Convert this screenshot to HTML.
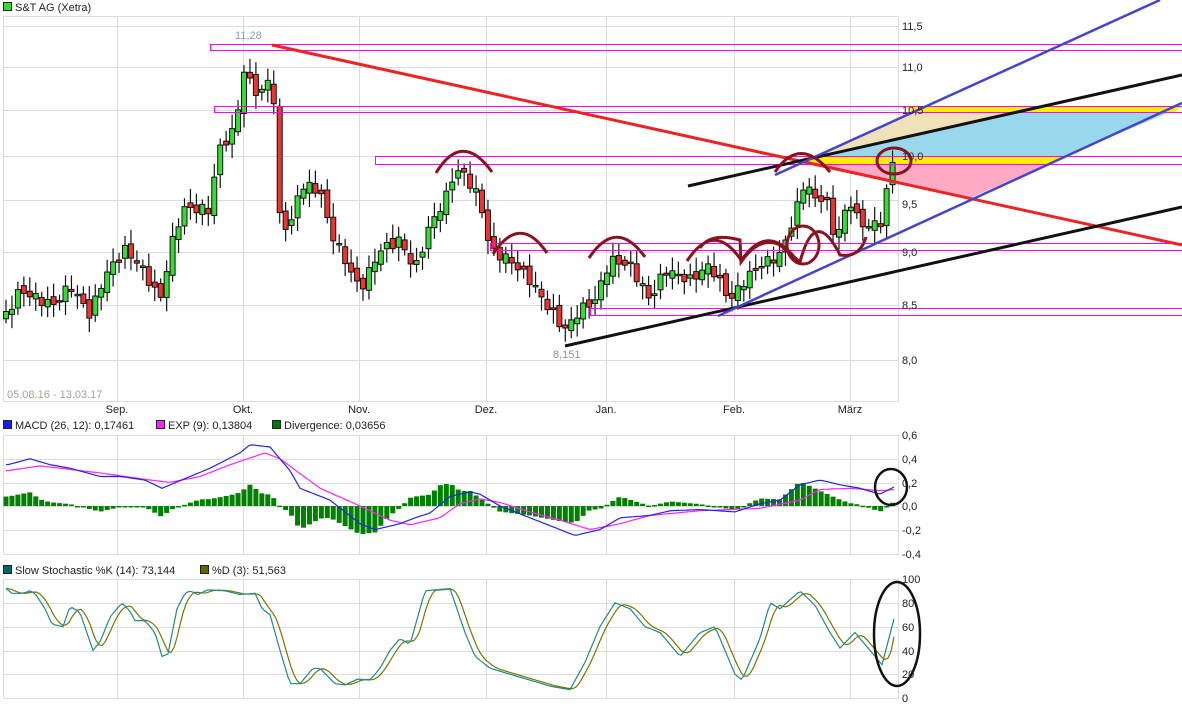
<!DOCTYPE html>
<html><head><meta charset="utf-8"><style>
body{margin:0;background:#fff;width:1182px;height:707px;overflow:hidden;font-family:"Liberation Sans",sans-serif}
svg{display:block}
text{font-family:"Liberation Sans",sans-serif;font-size:11px;fill:#222}
</style></head><body>
<svg id="s" width="1182" height="707" viewBox="0 0 1182 707">
<g id="grid" stroke="#dcdcdc" stroke-width="1" fill="none"></g>
<g id="fills"></g>
<g id="candles"></g>
<g id="over" fill="none"></g>
<g id="macd"></g>
<g id="stoch"></g>
<g id="labels"></g>
</svg>
<script>
const NS="http://www.w3.org/2000/svg";
function el(g,t,a,txt){const e=document.createElementNS(NS,t);for(const k in a)e.setAttribute(k,a[k]);if(txt!==undefined)e.textContent=txt;document.getElementById(g).appendChild(e);return e;}
const vx=[117,243,359,486,606,734,850];
function panel(y0,y1,hs){el('grid','rect',{x:3.5,y:y0+.5,width:895,height:y1-y0});hs.forEach(y=>el('grid','line',{x1:3,x2:898,y1:y+.5,y2:y+.5}));vx.forEach(x=>el('grid','line',{x1:x+.5,x2:x+.5,y1:y0,y2:y1}));}
panel(16,401,[26,67,110,156,200,252,305,360]);
panel(435,554,[459,483,506,530]);
panel(579,698,[603,627,651,674]);
const L=[[902,30,'11,5'],[902,71,'11,0'],[902,114,'10,5'],[902,160,'10,0'],[902,208,'9,5'],[902,256,'9,0'],[902,309,'8,5'],[902,364,'8,0'],
[902,439,'0,6'],[902,463,'0,4'],[902,487,'0,2'],[902,510,'0,0'],[902,534,'-0,2'],[902,558,'-0,4'],
[902,583,'100'],[902,607,'80'],[902,631,'60'],[902,655,'40'],[902,678,'20'],[902,702,'0']];
L.forEach(l=>el('labels','text',{x:l[0],y:l[1]},l[2]));
[[117,'Sep.'],[243,'Okt.'],[359,'Nov.'],[486,'Dez.'],[606,'Jan.'],[734,'Feb.'],[850,'März']].forEach(m=>el('labels','text',{x:m[0],y:413,'text-anchor':'middle'},m[1]));
el('labels','rect',{x:3.5,y:2.5,width:8,height:8,fill:'#33dd33',stroke:'#222'});
el('labels','text',{x:15,y:11},'S&T AG (Xetra)');
el('labels','text',{x:7,y:398,style:'fill:#b0a090'},'05.08.16 - 13.03.17');
el('labels','text',{x:235,y:39,style:'fill:#8ca0b8'},'11,28');
el('labels','text',{x:553,y:358,style:'fill:#a09080'},'8,151');
function leg(x,y,c,t){el('labels','rect',{x:x+.5,y:y-8.5,width:8,height:8,fill:c,stroke:'#222'});el('labels','text',{x:x+12,y:y},t);}
leg(3,429,'#1a1aee','MACD (26, 12): 0,17461');leg(156,429,'#ff22ff','EXP (9): 0,13804');leg(272,429,'#007700','Divergence: 0,03656');
leg(3,574,'#006666','Slow Stochastic %K (14): 73,144');leg(200,574,'#666600','%D (3): 51,563');
function interp(k,x){for(let i=0;i<k.length-1;i++){if(x>=k[i][0]&&x<=k[i+1][0]){const t=(x-k[i][0])/(k[i+1][0]-k[i][0]);return k[i][1]+t*(k[i+1][1]-k[i][1]);}}return x<k[0][0]?k[0][1]:k[k.length-1][1];}
const ck=[[6,315],[20,290],[40,300],[55,305],[70,285],[90,315],[105,275],[125,250],[140,265],[160,300],[175,230],[185,208],[210,210],[218,150],[235,130],[243,70],[255,90],[265,95],[272,55],[278,215],[290,230],[300,185],[320,190],[330,230],[345,260],[360,290],[380,250],[400,240],[415,270],[430,225],[445,200],[455,170],[465,175],[480,200],[490,250],[510,260],[530,280],[550,310],[565,330],[580,310],[595,300],[610,260],[630,265],[650,300],[665,270],[690,280],[710,265],[730,300],[745,280],[760,265],[780,255],[795,215],[805,180],[815,200],[825,195],[835,240],[850,200],[860,225],[880,225],[895,150]];
let prev=interp(ck,6);
for(let x=6;x<=896;x+=5.95){const c=interp(ck,x)+Math.sin(x*1.7)*5;const o=prev+Math.sin(x*2.3)*4;const up=c<o;const top=Math.min(o,c),bot=Math.max(o,c);
const w1=top-4-Math.abs(Math.sin(x*0.9))*10,w2=bot+4+Math.abs(Math.cos(x*1.3))*10;
el('candles','line',{x1:x,x2:x,y1:w1,y2:w2,stroke:'#111','stroke-width':1.2});
el('candles','rect',{x:x-2.5,y:top,width:5,height:Math.max(bot-top,1.5),fill:up?'#33dd33':'#ee3333',stroke:'#111','stroke-width':1});prev=c;}
el('fills','polygon',{points:'815,158 912,112 1023,112',fill:'#efe2b8'});
el('fills','polygon',{points:'823,156 1023,112 1170,112 1065,156',fill:'#99d8ea'});
el('fills','polygon',{points:'905,106 1182,106 1175,112 912,112',fill:'#ffee00'});
el('fills','polygon',{points:'805,156 1065,156 1050,164 800,164',fill:'#ffee00'});
el('fills','polygon',{points:'813,164 1048,164 970,198',fill:'#ffaac4'});
[[210,44,972,6],[214,106,968,6],[375,156,807,8],[490,243,692,7],[590,308,592,7]].forEach(r=>el('over','rect',{x:r[0]+.5,y:r[1]+.5,width:r[2],height:r[3],stroke:'#ff00ff','stroke-width':1}));
el('over','line',{x1:272,y1:45,x2:1182,y2:245,stroke:'#ee2222','stroke-width':3});
el('over','line',{x1:688,y1:186,x2:1182,y2:75,stroke:'#111','stroke-width':3});
el('over','line',{x1:565,y1:346,x2:1182,y2:207,stroke:'#111','stroke-width':3});
el('over','line',{x1:775,y1:175,x2:1160,y2:0,stroke:'#4444cc','stroke-width':2.5});
el('over','line',{x1:718,y1:316,x2:1182,y2:103,stroke:'#4444cc','stroke-width':2.5});
const dr={stroke:'#8b1020','stroke-width':3,fill:'none'};
['M436,173 Q462,130 492,172','M493,254 Q520,213 547,253','M589,258 Q616,217 645,257','M687,261 Q714,220 741,260','M741,261 Q767,222 795,258 ','M775,172 Q800,135 830,172'].forEach(d=>el('over','path',Object.assign({d},dr)));
el('over','path',Object.assign({d:'M700,248 Q710,232 740,240 L741,262 Q760,235 780,245 L800,262 Q815,205 840,255 Q860,258 866,237'},dr));
el('over','ellipse',Object.assign({cx:803,cy:245,rx:16,ry:19},dr));
el('over','ellipse',Object.assign({cx:894,cy:161,rx:17,ry:13},dr));
const my=v=>506-118*v;
const mb=[[8,.35],[30,.4],[50,.35],[70,.32],[100,.25],[120,.25],[145,.22],[162,.15],[190,.25],[210,.32],[240,.45],[250,.52],[270,.5],[290,.3],[300,.15],[330,.05],[360,-.15],[375,-.2],[400,-.15],[415,-.1],[430,-.06],[450,.08],[470,.12],[480,.1],[500,0],[530,-.1],[560,-.2],[575,-.25],[600,-.2],[620,-.1],[650,-.08],[670,-.04],[700,-.03],[735,-.05],[760,.02],[780,.05],[800,.18],[820,.22],[840,.18],[860,.15],[880,.1],[896,.17]];
const mm=[[8,.3],[40,.34],[100,.28],[150,.22],[170,.2],[200,.25],[230,.35],[265,.45],[280,.4],[320,.15],[360,0],[390,-.12],[410,-.16],[440,-.1],[460,.02],[480,.06],[500,.03],[530,-.05],[560,-.12],[590,-.2],[620,-.15],[650,-.08],[700,-.04],[760,-.02],[800,.05],[820,.14],[850,.15],[880,.13],[896,.14]];
for(let x=6;x<=896;x+=5.95){const d=(interp(mb,x)-interp(mm,x))*1.6;const h=d*118;el('macd','rect',{x:x-2.5,y:h>0?506-h:506,width:5,height:Math.max(Math.abs(h),1.5),fill:'#008000'});}
function polyf(g,f,c){let p=[];for(let x=6;x<=896;x+=3)p.push(x+','+f(x).toFixed(1));el(g,'polyline',{points:p.join(' '),fill:'none',stroke:c,'stroke-width':1.2});}
polyf('macd',x=>my(interp(mm,x)),'#ff22ff');polyf('macd',x=>my(interp(mb,x)),'#2222ee');
el('macd','ellipse',{cx:891,cy:487,rx:16,ry:18,fill:'none',stroke:'#111','stroke-width':2.5});
const sy=v=>698-1.19*v;
const sk=[[6,92],[12,88],[23,88],[30,90],[35,88],[45,75],[52,62],[63,60],[70,77],[80,72],[88,52],[93,40],[100,47],[110,68],[122,80],[130,73],[135,65],[145,65],[155,55],[162,35],[168,37],[177,75],[185,88],[190,90],[198,87],[208,91],[225,90],[240,87],[255,88],[262,75],[270,70],[280,40],[290,12],[300,12],[313,25],[320,25],[335,12],[345,11],[358,16],[370,15],[380,25],[390,40],[400,50],[410,45],[425,90],[450,92],[465,55],[475,35],[490,25],[510,20],[530,15],[550,10],[570,7],[585,30],[600,60],[615,80],[630,75],[645,60],[660,55],[680,35],[700,55],[715,60],[735,20],[742,15],[760,50],[770,80],[780,75],[800,90],[815,78],[830,55],[840,42],[855,55],[870,40],[882,28],[896,73]];
const K=x=>interp(sk,x);
const D=x=>x>=893?51.5:(K(x-2)+K(x-6)+K(x-10))/3;
polyf('stoch',x=>sy(D(x)),'#777700');polyf('stoch',x=>sy(K(x)),'#228888');
el('stoch','ellipse',{cx:897,cy:634,rx:23,ry:52,fill:'none',stroke:'#111','stroke-width':2.5});
</script>
</body></html>
